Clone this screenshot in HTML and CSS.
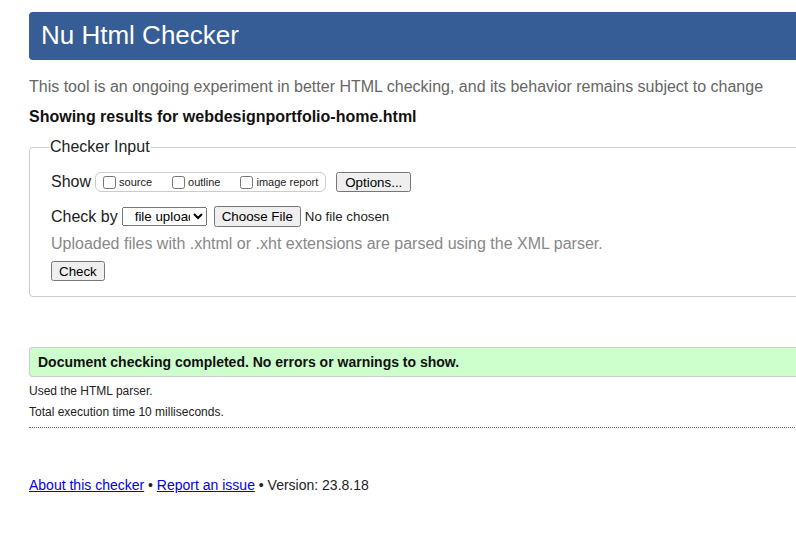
FILE: index.html
```html
<!DOCTYPE html>
<html lang="en">
<head>
<meta charset="utf-8">
<title>Nu Html Checker</title>
<link rel="stylesheet" href="styles.css">
</head>
<body>
<div class="page">
  <h1 class="banner">Nu Html Checker</h1>
  <p class="intro">This tool is an ongoing experiment in better HTML checking, and its behavior remains subject to change</p>
  <p class="showing">Showing results for webdesignportfolio-home.html</p>
  <form class="input-form">
    <fieldset class="checker">
      <legend>Checker Input</legend>
      <div class="row show-row">
        <span class="row-label">Show</span>
        <span class="show-box">
          <label class="opt"><input type="checkbox">source</label>
          <label class="opt"><input type="checkbox">outline</label>
          <label class="opt"><input type="checkbox">image report</label>
        </span>
        <button type="button" class="btn options">Options...</button>
      </div>
      <div class="row check-row">
        <span class="row-label">Check by</span>
        <select class="by"><option>file upload</option><option>address</option><option>text input</option></select>
        <input type="file" class="file">
      </div>
      <p class="note">Uploaded files with .xhtml or .xht extensions are parsed using the XML parser.</p>
      <button type="button" class="btn check">Check</button>
    </fieldset>
  </form>
  <p class="success">Document checking completed. No errors or warnings to show.</p>
  <p class="details">Used the HTML parser.</p>
  <p class="details">Total execution time 10 milliseconds.</p>
  <hr class="dots">
  <p class="footer"><a href="#">About this checker</a> • <a href="#">Report an issue</a> • Version: 23.8.18</p>
</div>
</body>
</html>
```

FILE: styles.css
```css
html, body {
  margin: 0;
  padding: 0;
  overflow: hidden;
  background: #fff;
}
body {
  font-family: "Liberation Sans", Arial, sans-serif;
  color: #222;
}
.page {
  width: 900px;
  padding: 12px 0 0 29px;
}
.banner {
  margin: 0;
  height: 48px;
  box-sizing: border-box;
  padding: 9px 0 0 12px;
  background: #365d95;
  color: #fff;
  font-weight: normal;
  font-size: 26px;
  line-height: 29px;
  border-radius: 4px 0 0 4px;
}
.intro {
  margin: 18px 0 0 0;
  font-size: 16px;
  line-height: 18px;
  color: #666;
}
.showing {
  margin: 12px 0 0 0;
  font-size: 16px;
  line-height: 18px;
  font-weight: bold;
  color: #111;
}
.input-form {
  margin: 12px 0 0 0;
}
.checker {
  margin: 0;
  border: 1px solid #ccc;
  border-radius: 4px 0 0 4px;
  padding: 4px 20px 15px 21px;
}
.checker legend {
  font-size: 16px;
  padding: 0 1px;
  margin-left: -2px;
  color: #222;
}
.row {
  display: flex;
  align-items: center;
}
.row-label {
  font-size: 16px;
  margin-right: 4px;
}
.show-row {
  margin-top: 12px;
}
.show-box {
  display: inline-flex;
  align-items: center;
  border: 1px solid #ccc;
  border-radius: 6px;
  height: 18px;
  padding: 0 7px 0 3px;
  margin-right: 10px;
}
.opt {
  display: inline-flex;
  align-items: flex-end;
  font-size: 11px;
  line-height: 13px;
  margin-right: 16px;
  padding-top: 1px;
}
.opt:last-child {
  margin-right: 0;
}
.opt input {
  margin: 0 3px 0 4px;
  width: 13px;
  height: 13px;
}
.btn {
  font-family: "Liberation Sans", Arial, sans-serif;
  font-size: 13.33px;
}
.options {
  height: 20px;
  padding: 0 7px;
}
.check-row {
  margin-top: 14px;
}
.by {
  width: 85px;
  height: 19px;
  font-size: 13.33px;
  padding-left: 8px;
  margin-right: 7px;
  font-family: "Liberation Sans", Arial, sans-serif;
}
.file {
  font-size: 13.33px;
  font-family: "Liberation Sans", Arial, sans-serif;
}
.note {
  margin: 8px 0 0 0;
  font-size: 16px;
  line-height: 18px;
  color: #888;
}
.check {
  margin-top: 8px;
  height: 20px;
  padding: 0 6px;
}
.success {
  margin: 50px 0 0 0;
  height: 30px;
  box-sizing: border-box;
  border: 1px solid #ccc;
  border-right: none;
  border-radius: 4px 0 0 4px;
  background: #ccffcc;
  font-weight: bold;
  font-size: 14px;
  line-height: 28px;
  padding-left: 8px;
  color: #111;
}
.details {
  margin: 7px 0 0 0;
  font-size: 12px;
  line-height: 15px;
}
.details + .details {
  margin-top: 6px;
}
.dots {
  margin: 7px 0 0 0;
  border: none;
  border-top: 1px dotted #666;
  height: 0;
}
.footer {
  margin: 49px 0 0 0;
  font-size: 14px;
  line-height: 16px;
}
.footer a {
  color: #00e;
}
```
